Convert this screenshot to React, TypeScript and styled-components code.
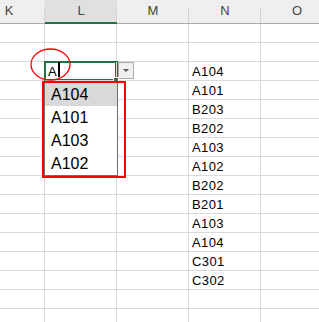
import styled, { createGlobalStyle } from 'styled-components'

const GlobalStyle = createGlobalStyle`
  body {
    margin: 0;
    background: #ffffff;
    font-family: 'Liberation Sans', Arial, sans-serif;
  }
`

const Viewport = styled.div`
  position: relative;
  width: 319px;
  height: 322px;
  overflow: hidden;
  background: #ffffff;
`

// the sheet is scrolled so column K is partly hidden on the left
const Sheet = styled.div`
  display: grid;
  grid-template-columns: repeat(5, 72px);
  grid-template-rows: 24px;
  grid-auto-rows: 19px;
  margin-left: -27px;
`

const HeaderCell = styled.div<{ $selected?: boolean }>`
  box-sizing: border-box;
  display: flex;
  align-items: center;
  justify-content: center;
  padding-bottom: 2px;
  font-size: 13px;
  color: #444444;
  background:
    linear-gradient(#d4d4d4, #d4d4d4) right bottom / 1px 16px no-repeat,
    ${(p) => (p.$selected ? '#e0e0e0' : '#efefef')};
  border-bottom: ${(p) => (p.$selected ? '2px solid #217346' : '1px solid #ababab')};
`

const Cell = styled.div`
  box-sizing: border-box;
  display: flex;
  align-items: center;
  padding-left: 3px;
  font-size: 13px;
  letter-spacing: 0.4px;
  color: #000000;
  white-space: nowrap;
  background: #ffffff;
  border-right: 1px solid #dadada;
  border-bottom: 1px solid #dadada;
`

const ActiveCell = styled(Cell)`
  position: relative;
  z-index: 2;
  box-shadow: 0 0 0 1px #217346, inset 0 0 0 1px #217346;
`

const Caret = styled.span`
  display: inline-block;
  width: 2px;
  height: 15px;
  margin-left: 1px;
  margin-bottom: 3px;
  background: #000000;
`

const FillHandle = styled.span`
  position: absolute;
  right: -3px;
  bottom: -3px;
  width: 4px;
  height: 4px;
  background: #217346;
  border: 1px solid #ffffff;
`

const DropButton = styled.span`
  position: absolute;
  left: calc(100% + 2px);
  top: 0;
  box-sizing: border-box;
  width: 16px;
  height: 17px;
  display: flex;
  align-items: center;
  justify-content: center;
  background: #f0f0f0;
  border: 1px solid #ababab;

  &::before {
    content: '';
    border-left: 3px solid transparent;
    border-right: 3px solid transparent;
    border-top: 3px solid #555555;
  }
`

const ListBox = styled.div`
  position: absolute;
  left: 44px;
  top: 82px;
  z-index: 3;
  width: 74px;
  padding-top: 0px;
  box-sizing: border-box;
  background: #ffffff;
  border: 1px solid #6e6e6e;
`

const ListItem = styled.div<{ $selected?: boolean }>`
  height: 23px;
  display: flex;
  align-items: center;
  padding-left: 6px;
  font-size: 16px;
  color: #000000;
  background: ${(p) => (p.$selected ? '#d9d9d9' : '#ffffff')};
`

const RedBox = styled.div`
  position: absolute;
  left: 42px;
  top: 81px;
  z-index: 4;
  width: 84px;
  height: 97px;
  box-sizing: border-box;
  border: 2px solid #ff0000;
`

const Circle = styled.svg`
  position: absolute;
  left: 30px;
  top: 48px;
  z-index: 4;
`

const columns = ['K', 'L', 'M', 'N', 'O']
const nValues = [
  '', '', 'A104', 'A101', 'B203', 'B202', 'A103', 'A102',
  'B202', 'B201', 'A103', 'A104', 'C301', 'C302', '', '',
]
const options = ['A104', 'A101', 'A103', 'A102']

const App = () => (
  <Viewport>
    <GlobalStyle />
    <Sheet>
      {columns.map((c) => (
        <HeaderCell key={c} $selected={c === 'L'}>
          {c}
        </HeaderCell>
      ))}
      {nValues.map((v, row) =>
        columns.map((c) => {
          if (c === 'L' && row === 2) {
            return (
              <ActiveCell key={c + row}>
                A<Caret />
                <DropButton />
                <FillHandle />
              </ActiveCell>
            )
          }
          return <Cell key={c + row}>{c === 'N' ? v : ''}</Cell>
        })
      )}
    </Sheet>

    <ListBox>
      {options.map((o, i) => (
        <ListItem key={o} $selected={i === 0}>
          {o}
        </ListItem>
      ))}
    </ListBox>
    <RedBox />
    <Circle width='42' height='34' viewBox='0 0 42 34'>
      <ellipse cx='20.5' cy='16.5' rx='19.5' ry='15.5' fill='none' stroke='#ff0000' strokeWidth='1.3' />
    </Circle>
  </Viewport>
)

export default App
